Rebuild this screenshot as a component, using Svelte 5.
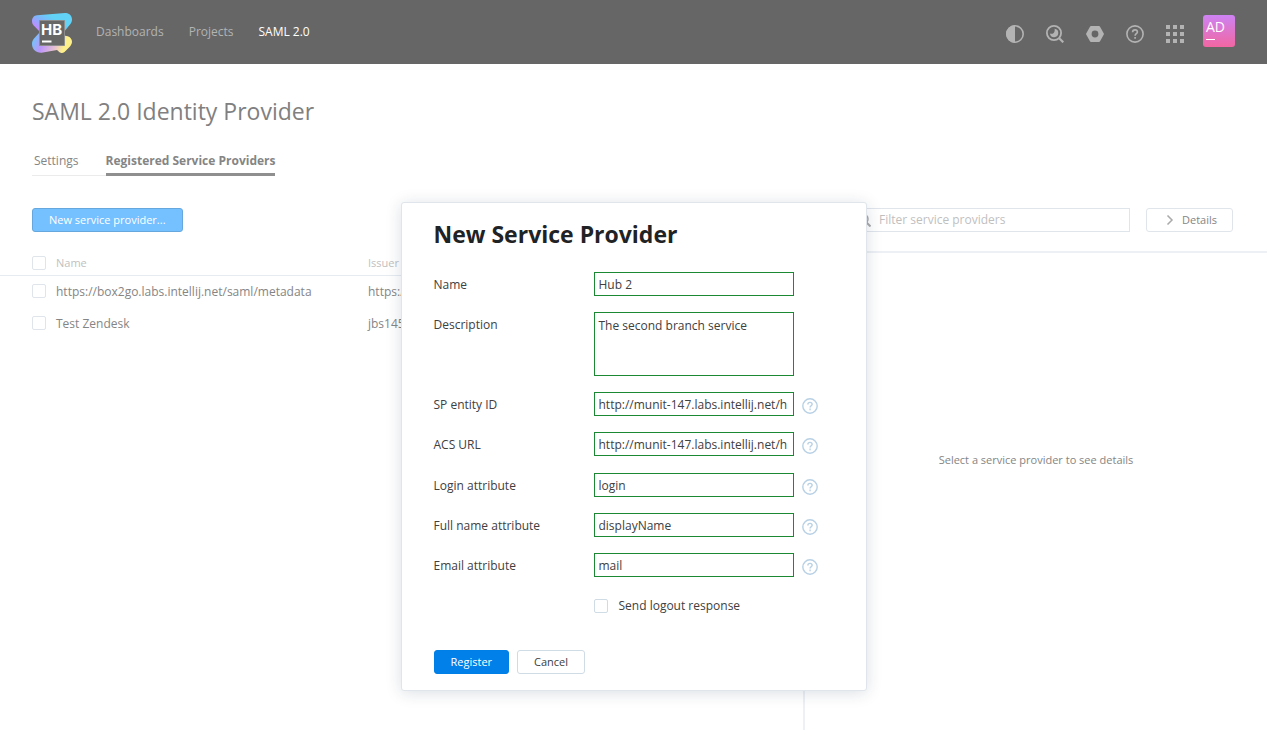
<script>
  const nav = [
    { label: 'Dashboards', active: false },
    { label: 'Projects', active: false },
    { label: 'SAML 2.0', active: true }
  ];

  const rows = [
    { id: 'box2go', name: 'https://box2go.labs.intellij.net/saml/metadata', issuer: 'https:/' },
    { id: 'zendesk', name: 'Test Zendesk', issuer: 'jbs145' }
  ];

  let serviceUrls = $state([
    { id: 'entity', label: 'SP entity ID', value: 'http://munit-147.labs.intellij.net/h' },
    { id: 'acs', label: 'ACS URL', value: 'http://munit-147.labs.intellij.net/h' }
  ]);

  let attributes = $state([
    { id: 'login', label: 'Login attribute', value: 'login' },
    { id: 'fullname', label: 'Full name attribute', value: 'displayName' },
    { id: 'email', label: 'Email attribute', value: 'mail' }
  ]);

  let name = $state('Hub 2');
  let description = $state('The second branch service');
</script>

{#snippet questionMark(size)}
  <svg width={size} height={size} viewBox="0 0 18 18" fill="none" stroke="currentColor" stroke-width="1.6" aria-hidden="true">
    <circle cx="9" cy="9" r="8.1" />
    <path d="M6.6 7.3c0-1.5 1-2.4 2.4-2.4s2.4.9 2.4 2.1c0 1.7-2.3 1.8-2.3 3.7" />
    <path d="M9.1 11.9v1.8" />
  </svg>
{/snippet}

{#snippet field(item)}
  <div class="field">
    <label for={item.id}>{item.label}</label>
    <input class="text" id={item.id} type="text" bind:value={item.value} />
    <button class="hint" type="button" aria-label="Help">{@render questionMark(16)}</button>
  </div>
{/snippet}

<div class="page">
  <header>
    <a class="logo" href="#home" aria-label="Hub">
      <svg width="40" height="40" viewBox="0 0 40 40">
        <defs>
          <linearGradient id="lg-top" x1="0" y1="0.6" x2="0.5" y2="0.2">
            <stop offset="0" stop-color="#c08cff" />
            <stop offset="0.55" stop-color="#7fb4fb" />
            <stop offset="1" stop-color="#62d2f7" />
          </linearGradient>
          <linearGradient id="lg-bottom" x1="0" y1="0.3" x2="1" y2="0.5">
            <stop offset="0" stop-color="#6cc8fa" />
            <stop offset="0.3" stop-color="#bd95fb" />
            <stop offset="0.65" stop-color="#e8c3cf" />
            <stop offset="0.85" stop-color="#fdf08a" />
          </linearGradient>
        </defs>
        <path fill="url(#lg-top)" d="M5 2.2 33 0c4-.3 7 2.700 7 6.400 0 2-.8 3.700-2 5.200L31 20H9L1.700 12.600C.5 11.300 0 9.800 0 8c0-3.200 2-5.500 5-5.800z" />
        <path fill="url(#lg-bottom)" d="M8 19 2 25.500C.7 27 0 29 0 31c0 5.300 4 9 9.500 8.700L25 37l2.500 2.300c1.600 1 3.500.9 5-.4l5.500-5.500c2.500-2.600 2.600-6 .5-8.400-1.300-1.500-3-2-5-2L31 19z" />
        <path fill="#676767" stroke="#8c8c8c" d="M7.500 7.500h25v25h-25z" />
        <path fill="#fff" d="M10 27.500h9.500v2H10z" />
        <text x="9" y="22" class="logo-text">HB</text>
      </svg>
    </a>
    <nav>
      {#each nav as item}
        <a href="#nav" class:active={item.active}>{item.label}</a>
      {/each}
    </nav>
    <div class="tools">
      <button type="button" aria-label="Theme">
        <svg width="18" height="18" viewBox="0 0 18 18"><circle cx="9" cy="9" r="8.200" fill="none" stroke="currentColor" stroke-width="1.600" /><path fill="currentColor" d="M9 0a9 9 0 0 0 0 18z" /></svg>
      </button>
      <button type="button" aria-label="Search">
        <svg width="18" height="18" viewBox="0 0 18 18"><circle cx="8" cy="8" r="7.100" fill="none" stroke="currentColor" stroke-width="1.800" /><path d="m13 13 4.300 4.300" stroke="currentColor" stroke-width="2.200" /><path fill="currentColor" d="M8.500 3.800a4.200 4.200 0 1 1-4.600 4.700c1.300.6 2.700.5 3.800-.6 1-1.100 1.300-2.700.8-4.100z" /></svg>
      </button>
      <button type="button" aria-label="Administration">
        <svg width="18" height="18" viewBox="0 0 18 18"><path fill="currentColor" fill-rule="evenodd" d="M5 1h8c.4 0 .7.200.9.500l3.900 6.900c.2.400.2.800 0 1.200l-3.900 6.900c-.2.300-.5.500-.9.500H5c-.4 0-.7-.2-.9-.5L.2 9.600a1.200 1.200 0 0 1 0-1.200l3.900-6.900c.2-.3.500-.5.900-.5zm4 4.600a3.400 3.400 0 1 0 0 6.800 3.400 3.400 0 0 0 0-6.800z" /></svg>
      </button>
      <button type="button" aria-label="Help">{@render questionMark(18)}</button>
      <button type="button" aria-label="Services">
        <svg width="18" height="18" viewBox="0 0 18 18" fill="currentColor"><path d="M0 0h4v4H0zM7 0h4v4H7zM14 0h4v4h-4zM0 7h4v4H0zM7 7h4v4H7zM14 7h4v4h-4zM0 14h4v4H0zM7 14h4v4H7zM14 14h4v4h-4z" /></svg>
      </button>
      <button type="button" class="avatar"><span>AD</span></button>
    </div>
  </header>

  <main>
    <h1>SAML 2.0 Identity Provider</h1>
    <div class="tabs">
      <a href="#settings">Settings</a>
      <a href="#providers" class="active">Registered Service Providers</a>
    </div>
    <div class="toolbar">
      <button type="button" class="new">New service provider...</button>
      <div class="filter">
        <svg width="14" height="14" viewBox="0 0 14 14" fill="none" stroke="currentColor"><circle cx="6" cy="6" r="5" stroke-width="1.500" /><path d="m9.500 9.500 4 4" stroke-width="2" /></svg>
        <input type="text" aria-label="Filter service providers" placeholder="Filter service providers" />
      </div>
      <button type="button" class="details">
        <svg width="8" height="10" viewBox="0 0 8 10" fill="none" stroke="#aaa" stroke-width="1.500"><path d="m1.500.5 4.500 4.500-4.500 4.500" /></svg>
        Details
      </button>
    </div>
    <div class="split">
      <div class="list">
        <table>
          <thead>
            <tr>
              <th class="check"><input type="checkbox" aria-label="Select all" /></th>
              <th class="name">Name</th>
              <th>Issuer</th>
            </tr>
          </thead>
          <tbody>
            {#each rows as row}
              <tr>
                <td class="check"><input type="checkbox" aria-label={row.name} /></td>
                <td>{row.name}</td>
                <td>{row.issuer}</td>
              </tr>
            {/each}
          </tbody>
        </table>
      </div>
      <aside>Select a service provider to see details</aside>
    </div>
  </main>
</div>

<div class="overlay">
  <form class="dialog" aria-labelledby="dialog-title">
    <h2 id="dialog-title">New Service Provider</h2>
    <div class="group">
      <div class="field">
        <label for="name">Name</label>
        <input class="text" id="name" type="text" bind:value={name} />
      </div>
      <div class="field">
        <label for="description">Description</label>
        <textarea class="text" id="description" bind:value={description}></textarea>
      </div>
      {#each serviceUrls as item}
        {@render field(item)}
      {/each}
    </div>
    <div class="group">
      {#each attributes as item}
        {@render field(item)}
      {/each}
    </div>
    <div class="logout">
      <input type="checkbox" id="logout" />
      <label for="logout">Send logout response</label>
    </div>
    <div class="actions">
      <button type="button" class="primary">Register</button>
      <button type="button" class="secondary">Cancel</button>
    </div>
  </form>
</div>

<style>
  :global(body) {
    margin: 0;
    background: #fff;
  }

  .page,
  .overlay {
    font-family: "Open Sans", "Noto Sans", sans-serif;
    font-size: 12px;
    line-height: 20px;
  }

  .page {
    display: flex;
    flex-direction: column;
    min-height: 100vh;
    color: #858585;
  }

  button,
  input,
  textarea {
    box-sizing: border-box;
    margin: 0;
    font: inherit;
    color: inherit;
  }

  button {
    padding: 0;
    border: 0;
    background: none;
    white-space: nowrap;
  }

  a {
    color: inherit;
    text-decoration: none;
  }

  input[type="checkbox"] {
    appearance: none;
    display: block;
    flex: none;
    width: 14px;
    height: 14px;
    border: 1px solid #dfe5eb;
    border-radius: 2px;
    background: #fff;
  }

  header {
    display: flex;
    align-items: center;
    box-sizing: border-box;
    height: 64px;
    padding: 0 32px;
    background: #666;
    color: #b3b3b3;
  }

  .logo {
    height: 40px;
    margin-top: 2px;
  }

  .logo svg {
    display: block;
  }

  .logo-text {
    font: 700 15px/1 Inter, sans-serif;
    fill: #fff;
  }

  nav {
    display: flex;
    gap: 25px;
    margin-left: 24px;
  }

  nav .active {
    color: #fff;
  }

  .tools {
    display: flex;
    align-items: center;
    gap: 22px;
    margin-left: auto;
    padding-top: 4px;
  }

  .tools svg,
  .hint svg {
    display: block;
  }

  .tools .avatar {
    display: flex;
    flex-direction: column;
    align-items: flex-start;
    width: 32px;
    height: 32px;
    margin: 0 0 6px -3px;
    padding: 2px 3px;
    border-radius: 3px;
    background: linear-gradient(#cd83f3, #f266a2);
    color: #fff;
    font-size: 14px;
  }

  .avatar::after {
    content: "";
    width: 9px;
    height: 1px;
    margin-top: 2px;
    background: #fff;
  }

  main {
    display: flex;
    flex: 1;
    flex-direction: column;
  }

  h1 {
    margin: 31px 32px 0;
    color: #808080;
    font-size: 23px;
    font-weight: 400;
    line-height: 32px;
  }

  .tabs {
    display: flex;
    align-self: flex-start;
    margin: 21px 32px 0;
  }

  .tabs a {
    padding: 3px 27px 4px 2px;
    border-bottom: 1px solid #ebebeb;
    line-height: 20px;
  }

  .tabs .active {
    padding: 3px 0 2px;
    border-bottom: 3px solid #8f8f8f;
    font-weight: 700;
  }

  .toolbar {
    display: flex;
    align-items: center;
    padding: 32px 34px 18px 32px;
  }

  .toolbar .new {
    height: 24px;
    padding: 0 16px;
    border: 1px solid #66a8dd;
    border-radius: 3px;
    background: #75c1ff;
    color: #fff;
    font-size: 11px;
  }

  .filter {
    display: flex;
    align-items: center;
    gap: 8px;
    box-sizing: border-box;
    width: 282px;
    height: 24px;
    margin-left: auto;
    padding: 0 8px;
    border: 1px solid #dfe5eb;
    color: #aaa;
  }

  .filter input {
    flex: 1;
    min-width: 0;
    padding: 0;
    border: 0;
    outline: 0;
    background: none;
  }

  .filter input::placeholder {
    color: #bfbfbf;
    opacity: 1;
  }

  .details {
    display: flex;
    align-items: center;
    gap: 8px;
    height: 24px;
    margin-left: 16px;
    padding: 0 15px 0 19px;
    border: 1px solid #dfe5eb;
    border-radius: 3px;
    font-size: 11px;
  }

  .split {
    display: flex;
    flex: 1;
  }

  .list {
    flex: 1;
    min-width: 0;
  }

  table {
    width: 100%;
    border-collapse: collapse;
    table-layout: fixed;
  }

  th,
  td {
    padding: 0;
    text-align: left;
    white-space: nowrap;
  }

  th {
    height: 25px;
    border-bottom: 1px solid #e6ebf1;
    color: #bfbfbf;
    font-size: 11px;
    font-weight: 400;
  }

  td {
    height: 32px;
  }

  td.check {
    height: 30px;
    padding-bottom: 2px;
  }

  .check {
    width: 24px;
    padding-left: 32px;
  }

  .name {
    width: 312px;
  }

  aside {
    display: flex;
    align-items: center;
    justify-content: center;
    box-sizing: border-box;
    width: 464px;
    margin-top: 1px;
    padding-bottom: 64px;
    border-top: 2px solid #edf0f5;
    border-left: 2px solid #edf0f5;
    font-size: 11px;
  }

  .overlay {
    position: absolute;
    inset: 0;
    display: flex;
    align-items: flex-start;
    justify-content: center;
    padding-top: 202px;
    color: #404040;
  }

  .dialog {
    display: flex;
    flex-direction: column;
    box-sizing: border-box;
    width: 466px;
    padding: 15px 32px 16px;
    border: 1px solid #dfe5eb;
    border-radius: 3px;
    background: #fff;
    box-shadow: 0 2px 16px rgba(0, 42, 76, 0.15);
  }

  h2 {
    margin: 0 0 22px;
    color: #1f2326;
    font-size: 23px;
    font-weight: 700;
    line-height: 32px;
  }

  .group {
    display: flex;
    flex-direction: column;
    gap: 16px;
  }

  .group + .group {
    margin-top: 17px;
  }

  .field {
    display: flex;
    align-items: flex-start;
  }

  .field label {
    width: 160px;
    height: 24px;
    line-height: 26px;
  }

  .text {
    width: 200px;
    height: 24px;
    padding: 0 4px;
    border: 1px solid #1b8833;
    border-radius: 0;
    outline: 0;
    background: #fff;
    line-height: 20px;
  }

  textarea.text {
    height: 64px;
    padding-top: 3px;
    resize: none;
  }

  .hint {
    margin: 6px 0 0 8px;
    color: #b8d1e5;
  }

  .logout {
    display: flex;
    align-items: center;
    gap: 11px;
    margin: 19px 0 34px 160px;
  }

  .logout input[type="checkbox"] {
    border-color: #cfdbe5;
  }

  .actions {
    display: flex;
    gap: 8px;
  }

  .actions button {
    height: 24px;
    padding: 0 16px;
    border: 1px solid #cfdbe5;
    border-radius: 3px;
    font-size: 11px;
  }

  .actions .primary {
    border-color: #007fe6;
    background: #0080e8;
    color: #fff;
  }
</style>
